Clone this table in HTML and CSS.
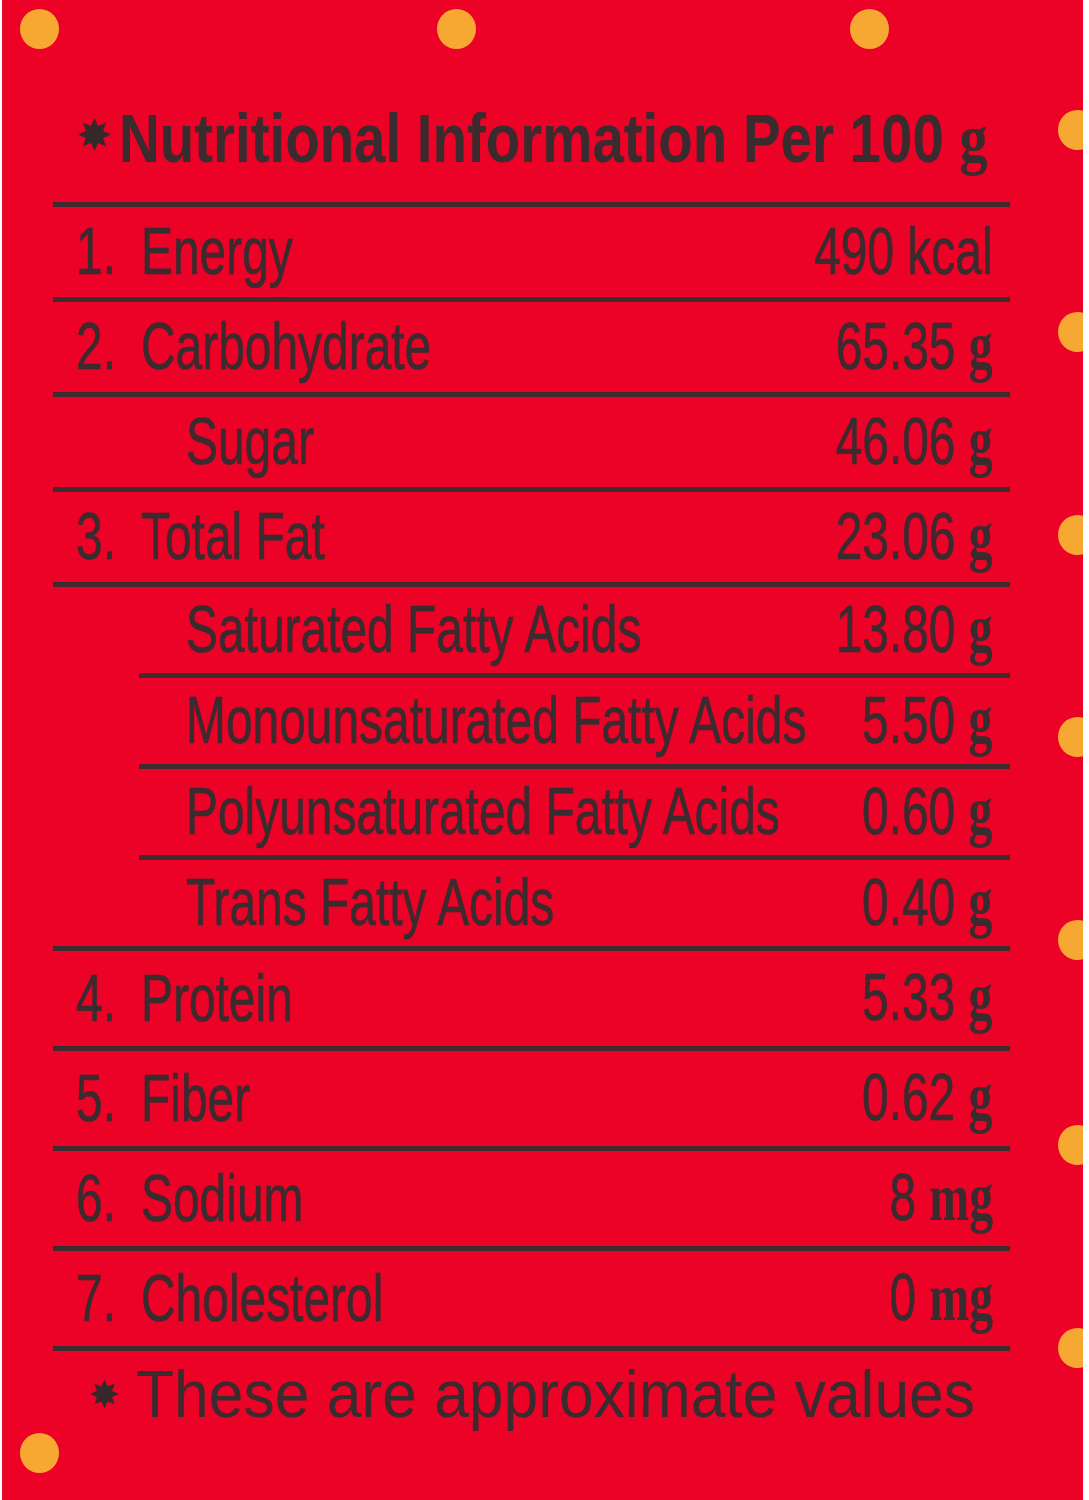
FILE: index.html
```html
<!DOCTYPE html>
<html lang="en">
<head>
<meta charset="utf-8">
<title>Nutritional Information</title>
<link rel="stylesheet" href="styles.css">
</head>
<body>
<div class="panel">
  <span class="dot dot-t1"></span>
  <span class="dot dot-t2"></span>
  <span class="dot dot-t3"></span>
  <span class="dot dot-r1"></span>
  <span class="dot dot-r2"></span>
  <span class="dot dot-r3"></span>
  <span class="dot dot-r4"></span>
  <span class="dot dot-r5"></span>
  <span class="dot dot-r6"></span>
  <span class="dot dot-r7"></span>
  <span class="dot dot-bl"></span>

  <h1 class="title">
    <svg class="star star-title" viewBox="-16 -16 32 32" aria-hidden="true"><polygon points="0,-16 3.4,-8.3 11.31,-11.31 8.3,-3.4 16,0 8.3,3.4 11.31,11.31 3.4,8.3 0,16 -3.4,8.3 -11.31,11.31 -8.3,3.4 -16,0 -8.3,-3.4 -11.31,-11.31 -3.4,-8.3"/></svg>
    <span class="title-text">Nutritional Information Per 100 <span class="unit">g</span></span>
  </h1>

  <div class="table">
    <div class="row">
      <span class="num"><span class="tx">1.</span></span>
      <span class="label"><span class="tx">Energy</span></span>
      <span class="value"><span class="tx">490 kcal</span></span>
    </div>
    <div class="row">
      <span class="num"><span class="tx">2.</span></span>
      <span class="label"><span class="tx">Carbohydrate</span></span>
      <span class="value"><span class="tx">65.35 <span class="unit">g</span></span></span>
    </div>
    <div class="row">
      <span class="label indent"><span class="tx">Sugar</span></span>
      <span class="value"><span class="tx">46.06 <span class="unit">g</span></span></span>
    </div>
    <div class="row">
      <span class="num"><span class="tx">3.</span></span>
      <span class="label"><span class="tx">Total Fat</span></span>
      <span class="value"><span class="tx">23.06 <span class="unit">g</span></span></span>
    </div>
    <div class="row row-s sub">
      <span class="label sub-label"><span class="tx">Saturated Fatty Acids</span></span>
      <span class="value"><span class="tx">13.80 <span class="unit">g</span></span></span>
    </div>
    <div class="row row-s sub">
      <span class="label sub-label"><span class="tx">Monounsaturated Fatty Acids</span></span>
      <span class="value"><span class="tx">5.50 <span class="unit">g</span></span></span>
    </div>
    <div class="row row-s sub">
      <span class="label sub-label"><span class="tx">Polyunsaturated Fatty Acids</span></span>
      <span class="value"><span class="tx">0.60 <span class="unit">g</span></span></span>
    </div>
    <div class="row row-s">
      <span class="label indent"><span class="tx">Trans Fatty Acids</span></span>
      <span class="value"><span class="tx">0.40 <span class="unit">g</span></span></span>
    </div>
    <div class="row row-l">
      <span class="num"><span class="tx">4.</span></span>
      <span class="label"><span class="tx">Protein</span></span>
      <span class="value"><span class="tx">5.33 <span class="unit">g</span></span></span>
    </div>
    <div class="row row-l">
      <span class="num"><span class="tx">5.</span></span>
      <span class="label"><span class="tx">Fiber</span></span>
      <span class="value"><span class="tx">0.62 <span class="unit">g</span></span></span>
    </div>
    <div class="row row-l">
      <span class="num"><span class="tx">6.</span></span>
      <span class="label"><span class="tx">Sodium</span></span>
      <span class="value"><span class="tx">8 <span class="unit">mg</span></span></span>
    </div>
    <div class="row row-l">
      <span class="num"><span class="tx">7.</span></span>
      <span class="label"><span class="tx">Cholesterol</span></span>
      <span class="value"><span class="tx">0 <span class="unit">mg</span></span></span>
    </div>
  </div>

  <p class="note">
    <svg class="star star-note" viewBox="-16 -16 32 32" aria-hidden="true"><polygon points="0,-16 3.4,-8.3 11.31,-11.31 8.3,-3.4 16,0 8.3,3.4 11.31,11.31 3.4,8.3 0,16 -3.4,8.3 -11.31,11.31 -8.3,3.4 -16,0 -8.3,-3.4 -11.31,-11.31 -3.4,-8.3"/></svg>
    <span class="note-text">These are approximate values</span>
  </p>
</div>
</body>
</html>
```

FILE: styles.css
```css
html, body {
  margin: 0;
  padding: 0;
  background: #ffffff;
}

.panel {
  position: relative;
  overflow: hidden;
  margin-left: 2px;
  width: 1081px;
  height: 1500px;
  box-sizing: border-box;
  padding-top: 104px;
  background: #ec0127;
  color: #3a2b2f;
  font-family: "Liberation Sans", Arial, sans-serif;
}

/* decorative dots */
.dot {
  position: absolute;
  width: 39px;
  height: 40px;
  border-radius: 50%;
  background: #f6a833;
}
.dot-t1 { left: 18px;  top: 9px; }
.dot-t2 { left: 435px; top: 9px; }
.dot-t3 { left: 848px; top: 9px; }
.dot-r1 { left: 1056px; top: 110px; }
.dot-r2 { left: 1056px; top: 312px; }
.dot-r3 { left: 1056px; top: 515px; }
.dot-r4 { left: 1056px; top: 717px; }
.dot-r5 { left: 1056px; top: 920px; }
.dot-r6 { left: 1056px; top: 1125px; }
.dot-r7 { left: 1056px; top: 1328px; }
.dot-bl { left: 18px;  top: 1433px; }

/* stars */
.star {
  flex-shrink: 0;
  fill: #34282b;
}
.star-title {
  width: 33px;
  height: 33px;
  margin-bottom: 8px;
}
.star-note {
  width: 29px;
  height: 30px;
}

/* title */
.title {
  display: flex;
  align-items: center;
  margin: 0 0 30px 0;
  padding-left: 76px;
  height: 68px;
  font-size: 68px;
  line-height: 68px;
  font-weight: 700;
  white-space: nowrap;
}
.title-text {
  display: inline-block;
  margin-left: 8px;
  transform: scaleX(0.83);
  transform-origin: left center;
}

.unit {
  font-family: "Liberation Serif", "Times New Roman", serif;
  font-weight: 700;
}

/* table */
.table {
  margin: 0 73px 0 51px;
  border-top: 5px solid #3f2a2e;
}

.row {
  display: flex;
  align-items: center;
  box-sizing: border-box;
  height: 95px;
  padding-bottom: 3px;
  border-bottom: 5px solid #3f2a2e;
  font-size: 67px;
  line-height: 67px;
  white-space: nowrap;
  -webkit-text-stroke: 0.6px #3a2b2f;
}
.row-s { height: 91px; }
.row-l { height: 100px; }
.row.sub { margin-left: 86px; }

.tx {
  display: inline-block;
  transform: scaleX(0.715);
  transform-origin: left center;
}

.num {
  flex-shrink: 0;
  width: 65px;
  margin-left: 23px;
}

.label {
  flex: 1 1 auto;
  min-width: 0;
}
.label.indent { padding-left: 133px; }
.label.sub-label { padding-left: 47px; }

.value {
  flex-shrink: 0;
  padding-right: 17px;
  text-align: right;
}
.value .tx {
  transform-origin: right center;
}
.value .unit {
  -webkit-text-stroke: 0;
}

/* footnote */
.note {
  display: flex;
  align-items: center;
  margin: 10px 0 0 0;
  padding-left: 88px;
  height: 66px;
  font-size: 66px;
  line-height: 66px;
  white-space: nowrap;
}
.note-text {
  display: inline-block;
  margin-left: 17px;
  transform: scaleX(0.945);
  transform-origin: left center;
}
```
